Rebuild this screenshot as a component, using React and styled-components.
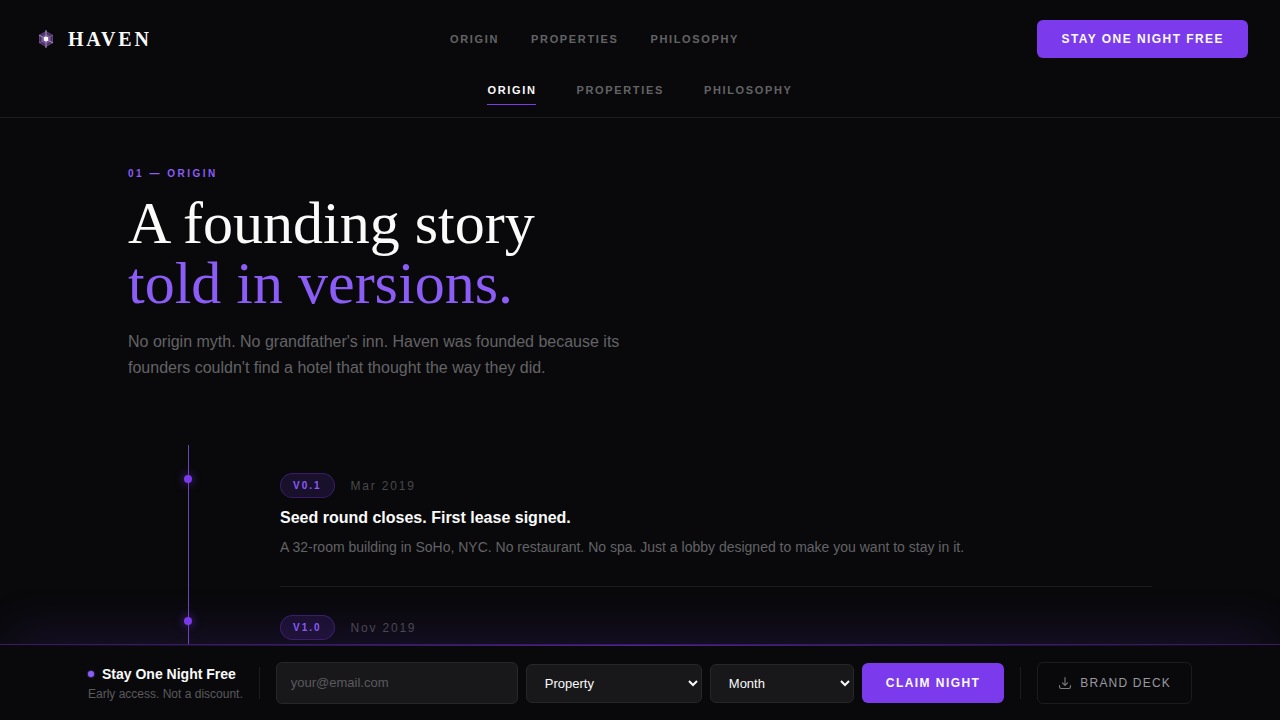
import React from "react";
import styled, { createGlobalStyle } from "styled-components";

const GlobalStyle = createGlobalStyle`
  * {
    box-sizing: border-box;
  }

  body {
    margin: 0;
    background: #09090b;
    color: #fafafa;
    font-family: "Liberation Sans", Arial, sans-serif;
  }

  h1, h2, p {
    margin: 0;
  }
`;

const Page = styled.div`
  display: flex;
  flex-direction: column;
  height: 100vh;
`;

const Header = styled.header`
  display: flex;
  align-items: center;
  justify-content: space-between;
  padding: 20px 32px;
`;

const Brand = styled.a`
  display: flex;
  align-items: center;
  gap: 8px;
  color: #fafafa;
  font-family: "Liberation Serif", "Times New Roman", serif;
  font-size: 20px;
  font-weight: 700;
  letter-spacing: 0.14em;
  line-height: 28px;
  text-decoration: none;
`;

const Nav = styled.nav`
  display: flex;
  gap: 32px;
`;

const NavLink = styled.a`
  color: #636366;
  font-size: 11px;
  font-weight: 700;
  letter-spacing: 0.15em;
  line-height: 12px;
  text-decoration: none;
`;

const Tabs = styled.nav`
  display: flex;
  justify-content: center;
  gap: 40px;
  padding: 6px 32px 12px;
  border-bottom: 1px solid #1c1c1f;
`;

const TabLink = styled(NavLink)`
  padding-bottom: 8px;
  border-bottom: 1px solid ${({ $active }) => ($active ? "#7c3aed" : "transparent")};
  color: ${({ $active }) => ($active ? "#fafafa" : "#636366")};
`;

const Button = styled.button`
  padding: 12px 24px;
  border: 0;
  border-radius: 6px;
  background: #7c3aed;
  color: #fafafa;
  font-family: inherit;
  font-size: 12px;
  font-weight: 700;
  letter-spacing: 0.12em;
  line-height: 14px;
  white-space: nowrap;
  cursor: pointer;
`;

const Main = styled.main`
  display: flex;
  flex: 1;
  flex-direction: column;
  width: 100%;
  max-width: 1088px;
  min-height: 0;
  margin: 0 auto;
  padding: 48px 32px 0;
  overflow: hidden;
`;

const Eyebrow = styled.p`
  margin-bottom: 12px;
  color: #8b5cf6;
  font-size: 10px;
  font-weight: 700;
  letter-spacing: 0.25em;
  line-height: 15px;
`;

const Title = styled.h1`
  font-family: "Liberation Serif", "Times New Roman", serif;
  font-size: 60px;
  font-weight: 400;
  line-height: 60px;
`;

const Accent = styled.span`
  display: block;
  color: #8b5cf6;
`;

const Lead = styled.p`
  max-width: 512px;
  margin: 16px 0 64px;
  color: #636366;
  font-size: 16px;
  line-height: 26px;
`;

const Timeline = styled.div`
  display: flex;
  flex: 1;
  flex-direction: column;
  background: linear-gradient(#6d45b8, #6d45b8) 60px 0 / 1px 100% no-repeat;
`;

const Entry = styled.article`
  display: grid;
  grid-template-columns: 120px 1fr;
  column-gap: 32px;
`;

const Dot = styled.span`
  width: 8px;
  height: 8px;
  margin-top: 30px;
  border-radius: 50%;
  background: #7c3aed;
  box-shadow: 0 0 10px rgba(124, 58, 237, 0.7);
  justify-self: center;
`;

const EntryBody = styled.div`
  padding: 28px 0;
  border-bottom: 1px solid #1c1c1f;
`;

const EntryMeta = styled.div`
  display: flex;
  align-items: center;
  gap: 16px;
`;

const Version = styled.span`
  padding: 4px 12px;
  border: 1px solid rgba(124, 58, 237, 0.3);
  border-radius: 16px;
  background: rgba(124, 58, 237, 0.15);
  color: #8b5cf6;
  font-size: 10px;
  font-weight: 700;
  letter-spacing: 0.2em;
  line-height: 15px;
`;

const EntryDate = styled.time`
  color: #48484b;
  font-size: 12px;
  letter-spacing: 0.15em;
  line-height: 16px;
`;

const EntryTitle = styled.h2`
  margin: 8px 0 6px;
  font-size: 16px;
  font-weight: 700;
  line-height: 24px;
`;

const EntryText = styled.p`
  color: #636366;
  font-size: 14px;
  line-height: 22px;
`;

const Bar = styled.aside`
  position: relative;
  border-top: 1px solid rgba(124, 58, 237, 0.4);
  background: #09090b;
  box-shadow: 0 -20px 50px -10px rgba(124, 58, 237, 0.15);

  &::before {
    content: "";
    position: absolute;
    top: 0;
    right: 0;
    left: 0;
    height: 1px;
    background: linear-gradient(90deg, transparent, #7c3aed, transparent);
    opacity: 0.6;
  }
`;

const BarContent = styled.div`
  display: flex;
  align-items: center;
  gap: 16px;
  max-width: 1152px;
  margin: 0 auto;
  padding: 17px 24px 16px;
`;

const Offer = styled.div`
  display: flex;
  flex-direction: column;
  padding-top: 2px;
`;

const OfferTitle = styled.p`
  display: flex;
  align-items: center;
  gap: 8px;
  font-size: 14px;
  font-weight: 700;
  line-height: 20px;

  &::before {
    content: "";
    width: 6px;
    height: 6px;
    border-radius: 50%;
    background: #8b5cf6;
    box-shadow: 0 0 2px #8b5cf6;
  }
`;

const OfferText = styled.p`
  color: #5a5a5e;
  font-size: 12px;
  line-height: 20px;
  white-space: nowrap;
`;

const Divider = styled.span`
  width: 1px;
  height: 32px;
  background: #1c1c1f;
`;

const Form = styled.form`
  display: flex;
  flex: 1;
  align-items: center;
  gap: 8px;
`;

const EmailInput = styled.input`
  flex: 1;
  min-width: 0;
  height: 42px;
  padding: 0 14px 2px;
  border: 1px solid #27272a;
  border-radius: 6px;
  background: #18181b;
  color: #fafafa;
  font-family: inherit;
  font-size: 13px;

  &::placeholder {
    color: #5a5a5e;
  }
`;

const Select = styled.select`
  width: ${({ $width }) => $width};
  height: 39px;
  padding: 0 14px;
  border: 1px solid #27272a;
  border-radius: 6px;
  background: #18181b;
  color: #fafafa;
  font-family: inherit;
  font-size: 13px;
`;

const ClaimButton = styled(Button)`
  padding: 13px 24px;
`;

const DeckLink = styled.a`
  display: flex;
  align-items: center;
  gap: 8px;
  height: 42px;
  padding: 0 20px;
  border: 1px solid #1c1c1f;
  border-radius: 6px;
  color: #98989f;
  font-size: 12px;
  letter-spacing: 0.1em;
  text-decoration: none;
  white-space: nowrap;
`;

const links = ["Origin", "Properties", "Philosophy"];

const entries = [
  {
    version: "V0.1",
    date: "Mar 2019",
    title: "Seed round closes. First lease signed.",
    text: "A 32-room building in SoHo, NYC. No restaurant. No spa. Just a lobby designed to make you want to stay in it.",
  },
  { version: "V1.0", date: "Nov 2019" },
];

const LogoMark = () => (
  <svg width="28" height="28" viewBox="0 0 28 28" fill="none" aria-hidden="true">
    <path d="M14 6.5l6.5 3.75v7.5L14 21.5l-6.5-3.75v-7.5z" fill="#47305f" stroke="#6b4a8c" strokeWidth="0.8" />
    <path d="M14 5v18M7 10l14 8" stroke="#c9b8d8" strokeWidth="1" opacity="0.8" />
    <path d="M7 18l14-8" stroke="#a58abd" strokeWidth="0.8" opacity="0.6" />
    <path d="M14 9.5l4 2.25v4.5l-4 2.25-4-2.25v-4.5z" fill="#8d68b3" fillOpacity="0.5" stroke="#8d68b3" strokeWidth="0.8" />
    <circle cx="14" cy="14" r="2.4" fill="#fff" />
  </svg>
);

const DownloadIcon = () => (
  <svg width="14" height="14" viewBox="0 0 14 14" fill="none" stroke="#7b7b82" strokeWidth="1.1" strokeLinecap="round" strokeLinejoin="round" aria-hidden="true">
    <path d="M7 1.5v7.5M4.5 6.8L7 9.3l2.5-2.5" />
    <path d="M1.5 9.5v1.3a1.7 1.7 0 0 0 1.7 1.7h7.6a1.7 1.7 0 0 0 1.7-1.7V9.5" />
  </svg>
);

const App = () => {
  return (
    <Page>
      <GlobalStyle />
      <Header>
        <Brand href="#">
          <LogoMark />
          HAVEN
        </Brand>
        <Nav aria-label="Main">
          {links.map((link) => (
            <NavLink key={link} href={`#${link.toLowerCase()}`}>
              {link.toUpperCase()}
            </NavLink>
          ))}
        </Nav>
        <Button type="button">STAY ONE NIGHT FREE</Button>
      </Header>
      <Tabs aria-label="Sections">
        {links.map((link, index) => (
          <TabLink key={link} href={`#${link.toLowerCase()}`} $active={index === 0}>
            {link.toUpperCase()}
          </TabLink>
        ))}
      </Tabs>
      <Main>
        <Eyebrow>01 — ORIGIN</Eyebrow>
        <Title>
          A founding story
          <Accent>told in versions.</Accent>
        </Title>
        <Lead>
          No origin myth. No grandfather's inn. Haven was founded because its
          founders couldn't find a hotel that thought the way they did.
        </Lead>
        <Timeline>
          {entries.map((entry) => (
            <Entry key={entry.version}>
              <Dot />
              <EntryBody>
                <EntryMeta>
                  <Version>{entry.version}</Version>
                  <EntryDate>{entry.date}</EntryDate>
                </EntryMeta>
                {entry.title && <EntryTitle>{entry.title}</EntryTitle>}
                {entry.text && <EntryText>{entry.text}</EntryText>}
              </EntryBody>
            </Entry>
          ))}
        </Timeline>
      </Main>
      <Bar>
        <BarContent>
          <Offer>
            <OfferTitle>Stay One Night Free</OfferTitle>
            <OfferText>Early access. Not a discount.</OfferText>
          </Offer>
          <Divider />
          <Form>
            <EmailInput type="email" placeholder="your@email.com" aria-label="Email" />
            <Select $width="176px" aria-label="Property">
              <option>Property</option>
            </Select>
            <Select $width="144px" aria-label="Month">
              <option>Month</option>
            </Select>
            <ClaimButton type="submit">CLAIM NIGHT</ClaimButton>
          </Form>
          <Divider />
          <DeckLink href="#brand-deck">
            <DownloadIcon />
            BRAND DECK
          </DeckLink>
        </BarContent>
      </Bar>
    </Page>
  );
};

export default App;
